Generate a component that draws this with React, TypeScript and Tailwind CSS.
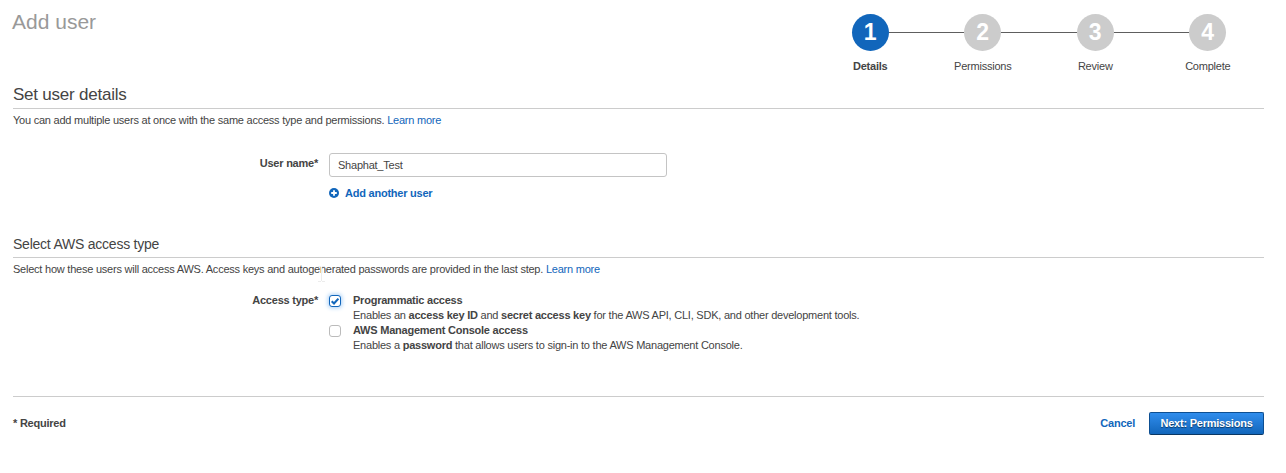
import React from "react";

const steps = ["Details", "Permissions", "Review", "Complete"];

function Stepper() {
  return (
    <ol className="grid w-[450px] grid-cols-4 pt-[14px]">
      {steps.map((label, i) => (
        <li key={label} className="flex flex-col items-center">
          <div className="flex w-full items-center">
            <span className={i === 0 ? "h-px flex-1" : "h-px flex-1 bg-[#5e5e5e]"} />
            <span
              className={
                "flex h-[37px] w-[37px] items-center justify-center rounded-full text-[23px] leading-[37px] font-bold tracking-normal text-white " +
                (i === 0 ? "bg-[#1166bb]" : "bg-[#cccccc]")
              }
            >
              {i + 1}
            </span>
            <span className={i === 3 ? "h-px flex-1" : "h-px flex-1 bg-[#5e5e5e]"} />
          </div>
          <span className={"mt-2 leading-[15px] " + (i === 0 ? "font-bold" : "")}>{label}</span>
        </li>
      ))}
    </ol>
  );
}

function Link({ children }: { children: React.ReactNode }) {
  return (
    <a href="#" className="text-[#1166bb]">
      {children}
    </a>
  );
}

export default function App() {
  return (
    <main className="relative h-[473px] bg-white pr-[22px] pl-[13px] font-['Liberation_Sans',Arial,sans-serif] text-[11px] leading-[15px] tracking-[-0.23px] text-[#444444]">
      <header className="flex h-[80px] justify-between">
        <h1 className="-ml-px pt-[9px] text-[21px] leading-[26px] tracking-normal text-[#999999]">Add user</h1>
        <Stepper />
      </header>

      <section className="h-[153px]">
        <h2 className="h-[29px] border-b border-[#cccccc] pt-[5px] text-[17px] leading-[20px]">Set user details</h2>
        <p className="mt-1">
          You can add multiple users at once with the same access type and permissions. <Link>Learn more</Link>
        </p>
        <div className="mt-[25px] flex">
          <label htmlFor="user-name" className="w-[305px] pt-[3px] text-right font-bold">
            User name*
          </label>
          <div className="ml-[11px]">
            <input
              id="user-name"
              defaultValue="Shaphat_Test"
              className="block h-6 w-[338px] rounded-[3px] border border-[#c4c4c4] bg-white px-2 leading-[15px] outline-none"
            />
            <button className="mt-[9px] flex items-center font-bold text-[#1166bb]">
              <svg width="10" height="10" viewBox="0 0 10 10" className="mr-[6px] mb-[2px]">
                <circle cx="5" cy="5" r="5" fill="#1166bb" />
                <path d="M5 2.2v5.6M2.2 5h5.6" stroke="#fff" strokeWidth="1.8" />
              </svg>
              Add another user
            </button>
          </div>
        </div>
      </section>

      <section className="h-[163px]">
        <h3 className="h-[25px] border-b border-[#cccccc] pt-[1px] text-[14px] leading-[20px]">Select AWS access type</h3>
        <p className="mt-1">
          Select how these users will access AWS. Access keys and autogenerated passwords are provided in the last step.{" "}
          <Link>Learn more</Link>
        </p>
        <div className="mt-4 flex">
          <div className="w-[305px] text-right font-bold">Access type*</div>
          <div className="ml-[11px]">
            <label className="flex">
              <span className="mt-[2px] mr-3 flex h-3 w-3 items-center justify-center rounded-[3px] border border-[#1166bb] bg-white shadow-[0_0_4px_1px_#a9d0f7]">
                <svg width="10" height="10" viewBox="0 0 10 10" className="shrink-0">
                  <path d="M1.7 5.2 4 7.4 8.4 2.6" fill="none" stroke="#1166bb" strokeWidth="2.1" />
                </svg>
              </span>
              <span>
                <b className="block">Programmatic access</b>
                Enables an <b>access key ID</b> and <b>secret access key</b> for the AWS API, CLI, SDK, and other development tools.
              </span>
            </label>
            <label className="flex">
              <span className="mt-[2px] mr-3 h-3 w-3 rounded-[3px] border border-[#bbbbbb] bg-white" />
              <span>
                <b className="block">AWS Management Console access</b>
                Enables a <b>password</b> that allows users to sign-in to the AWS Management Console.
              </span>
            </label>
          </div>
        </div>
      </section>

      <footer className="flex h-[39px] items-end justify-between border-t border-[#cccccc]">
        <span className="mb-1 font-bold">* Required</span>
        <div className="flex items-center">
          <button className="mr-[14px] font-bold text-[#1166bb]">Cancel</button>
          <button className="h-[23px] w-[115px] rounded-[2px] border border-[#0d4f92] border-b-[#0a3763] bg-linear-to-b from-[#2f8ded] to-[#1166bb] font-bold text-white [text-shadow:0_1px_1px_#0a3763]">
            Next: Permissions
          </button>
        </div>
      </footer>

      {/* text pointer */}
      <svg className="pointer-events-none absolute top-[266px] left-[318px]" width="7" height="16" viewBox="0 0 7 16">
        <path d="M0 .5h3M4 .5h3M3.5 1v14M0 15.5h3M4 15.5h3" fill="none" stroke="#ececec" />
      </svg>
    </main>
  );
}
